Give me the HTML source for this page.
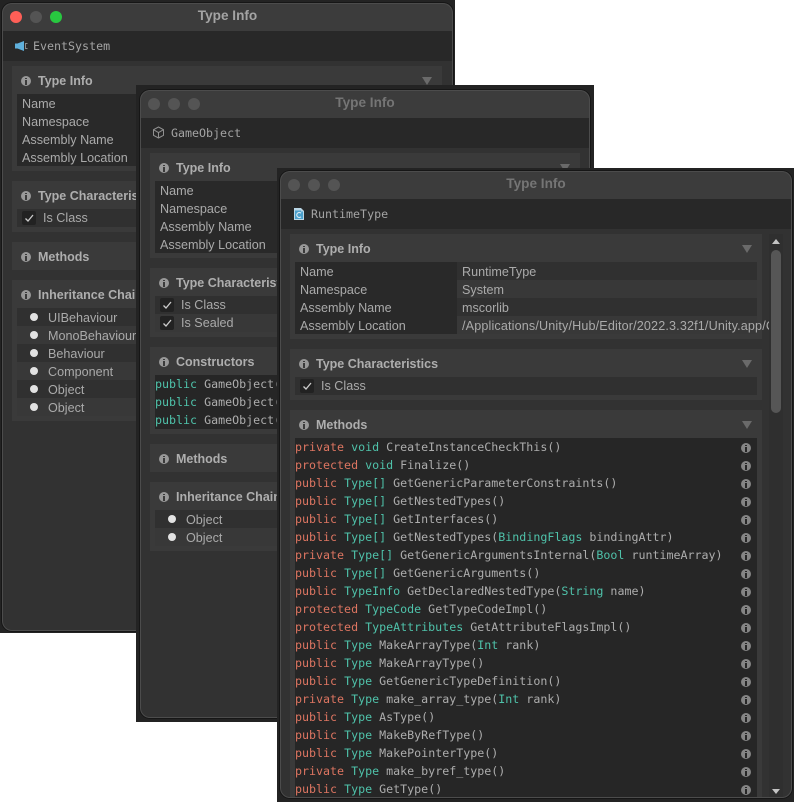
<!DOCTYPE html>
<html><head><meta charset="utf-8"><style>
html,body{margin:0;padding:0;background:#fff;width:794px;height:802px;overflow:hidden}
*{box-sizing:border-box}
#w{position:absolute;left:0;top:0;width:794px;height:802px;overflow:hidden;filter:blur(.35px)}
.box{position:absolute;background:#232323}
.win{position:absolute;background:#323232;border-radius:10px;overflow:hidden;box-shadow:0 0 0 1px #161616;font:12.6px/18px "Liberation Sans",sans-serif;color:#aaa}
.win:after{content:"";position:absolute;inset:0;border-radius:10px;border:1px solid #4c4c4c;pointer-events:none}
.tb{position:absolute;left:0;right:0;top:0;height:28px;background:#3c3c3c}
.tt{position:absolute;left:0;right:0;top:4px;text-align:center;font:bold 13.6px/18px "Liberation Sans",sans-serif;color:#757575}
.l{position:absolute;top:8px;width:12px;height:12px;border-radius:50%;background:#545454}
.bar{position:absolute;left:0;right:0;top:28px;height:30px;background:#282828}
.nm{position:absolute;left:31px;top:6px;font:11.65px/18px "DejaVu Sans Mono","Liberation Mono",monospace;color:#a4a4a4}
.ic{position:absolute;left:12px;top:8px}
.s{position:absolute;left:10px;background:#3a3a3a}
.h{position:absolute;left:26px;top:6px;font:bold 12.5px/18px "Liberation Sans",sans-serif;color:#aeaeae;white-space:nowrap}
i.n{position:absolute;left:9px;top:10px;width:10px;height:10px;border-radius:50%;background:#999}
i.n:before{content:"";position:absolute;left:4px;top:1.5px;width:2px;height:1.6px;background:#3a3a3a}
i.n:after{content:"";position:absolute;left:4px;top:4px;width:2px;height:4.5px;background:#3a3a3a}
.t{position:absolute;left:0;width:0;height:0;border-left:5px solid transparent;border-right:5px solid transparent;border-top:8.5px solid #6a6a6a}
.r{position:absolute;left:5px;right:5px;height:18px;white-space:nowrap;overflow:hidden}
.a{background:#303030}.b{background:#383838}
.d{background:#292929}
.r span{line-height:20px}
.r span.x{position:absolute;left:5px;top:0}
.r span.v{position:absolute;left:167px;top:0}
.r .k~span.x{line-height:19px}
.k{position:absolute;left:5px;top:2px;width:14px;height:14px;background:#222;border-radius:2px}
.o{position:absolute;left:13px;top:5px;width:8px;height:8px;border-radius:50%;background:#e2e2e2}
.code{position:absolute;left:5px;font:11.65px/18px "DejaVu Sans Mono","Liberation Mono",monospace;color:#adadad;background:#262626;white-space:nowrap;overflow:hidden}
.code div{height:18px;position:relative}
.code i.n{left:auto;right:6px;top:5px;background:#858585}
.code i.n:before,.code i.n:after{background:#262626}
b{font-weight:normal}
.p{color:#dd7561}.c{color:#4fc2aa}
</style></head><body><div id="w">

<!-- WINDOW 1 -->
<div class="box" style="left:0;top:0;width:455px;height:633px"></div>
<div class="win" style="left:2px;top:3px;width:451px;height:628px">
  <div class="tb"></div><div class="tt" style="color:#a4a4a4">Type Info</div>
  <div class="l" style="left:8px;background:#fe5f57"></div><div class="l" style="left:28px"></div><div class="l" style="left:48px;background:#28c840"></div>
  <div class="bar"><div class="nm">EventSystem</div>
    <svg class="ic" style="left:13px;top:10px" width="13" height="10" viewBox="0 0 13 10"><path d="M0 2.500L2.500 2.500 9 0v10L2.500 7.500 0 7.500z" fill="#5fb0dc"/><path d="M10 2.500h2.500M10 7.500h2.500M10.500 2v6" fill="none" stroke="#8a8a8a" stroke-width="1"/></svg></div>
  <div class="s" style="top:63px;width:430px;height:105px"><i class="n"></i><div class="h">Type Info</div><div class="t" style="left:410px;top:11px"></div>
    <div class="r d" style="top:28px;height:72px;right:5px"></div>
    <div class="r" style="top:28px"><span class="x">Name</span></div>
    <div class="r" style="top:46px"><span class="x">Namespace</span></div>
    <div class="r" style="top:64px"><span class="x">Assembly Name</span></div>
    <div class="r" style="top:82px"><span class="x">Assembly Location</span></div>
  </div>
  <div class="s" style="top:178px;width:430px;height:51px"><i class="n"></i><div class="h">Type Characteristics</div>
    <div class="r a" style="top:28px"><div class="k"></div><svg style="position:absolute;left:5px;top:2px" width="14" height="14"><path d="M3.500 7.500l2.500 2.500 5-6" fill="none" stroke="#ccc" stroke-width="1.300"/></svg><span class="x" style="left:26px">Is Class</span></div>
  </div>
  <div class="s" style="top:239px;width:430px;height:28px"><i class="n"></i><div class="h">Methods</div></div>
  <div class="s" style="top:277px;width:430px;height:141px"><i class="n"></i><div class="h">Inheritance Chain</div>
    <div class="r a" style="top:28px"><div class="o"></div><span class="x" style="left:31px">UIBehaviour</span></div>
    <div class="r b" style="top:46px"><div class="o"></div><span class="x" style="left:31px">MonoBehaviour</span></div>
    <div class="r a" style="top:64px"><div class="o"></div><span class="x" style="left:31px">Behaviour</span></div>
    <div class="r b" style="top:82px"><div class="o"></div><span class="x" style="left:31px">Component</span></div>
    <div class="r a" style="top:100px"><div class="o"></div><span class="x" style="left:31px">Object</span></div>
    <div class="r b" style="top:118px"><div class="o"></div><span class="x" style="left:31px">Object</span></div>
  </div>
</div>

<!-- WINDOW 2 -->
<div class="box" style="left:136px;top:85px;width:458px;height:637px"></div>
<div class="win" style="left:140px;top:90px;width:450px;height:628px">
  <div class="tb"></div><div class="tt">Type Info</div>
  <div class="l" style="left:8px"></div><div class="l" style="left:28px"></div><div class="l" style="left:48px"></div>
  <div class="bar"><div class="nm">GameObject</div>
    <svg class="ic" width="13" height="13" viewBox="0 0 13 13"><path d="M6.500 1l5 2.700v5.600l-5 2.700-5-2.700V3.700zM1.500 3.700l5 2.800 5-2.800M6.500 6.500V12" fill="none" stroke="#909090" stroke-width="1"/></svg></div>
  <div class="s" style="top:63px;width:430px;height:105px"><i class="n"></i><div class="h">Type Info</div><div class="t" style="left:410px;top:11px"></div>
    <div class="r d" style="top:28px;height:72px"></div>
    <div class="r" style="top:28px"><span class="x">Name</span></div>
    <div class="r" style="top:46px"><span class="x">Namespace</span></div>
    <div class="r" style="top:64px"><span class="x">Assembly Name</span></div>
    <div class="r" style="top:82px"><span class="x">Assembly Location</span></div>
  </div>
  <div class="s" style="top:178px;width:430px;height:69px"><i class="n"></i><div class="h">Type Characteristics</div>
    <div class="r a" style="top:28px"><div class="k"></div><svg style="position:absolute;left:5px;top:2px" width="14" height="14"><path d="M3.500 7.500l2.500 2.500 5-6" fill="none" stroke="#ccc" stroke-width="1.300"/></svg><span class="x" style="left:26px">Is Class</span></div>
    <div class="r b" style="top:46px"><div class="k"></div><svg style="position:absolute;left:5px;top:2px" width="14" height="14"><path d="M3.500 7.500l2.500 2.500 5-6" fill="none" stroke="#ccc" stroke-width="1.300"/></svg><span class="x" style="left:26px">Is Sealed</span></div>
  </div>
  <div class="s" style="top:257px;width:430px;height:87px"><i class="n"></i><div class="h">Constructors</div>
    <div class="code" style="top:28px;width:420px;height:54px"><div><b class="c">public</b> GameObject(</div><div><b class="c">public</b> GameObject(</div><div><b class="c">public</b> GameObject(</div></div>
  </div>
  <div class="s" style="top:354px;width:430px;height:28px"><i class="n"></i><div class="h">Methods</div></div>
  <div class="s" style="top:392px;width:430px;height:69px"><i class="n"></i><div class="h">Inheritance Chain</div>
    <div class="r a" style="top:28px"><div class="o"></div><span class="x" style="left:31px">Object</span></div>
    <div class="r b" style="top:46px"><div class="o"></div><span class="x" style="left:31px">Object</span></div>
  </div>
</div>

<!-- WINDOW 3 -->
<div class="box" style="left:277px;top:168px;width:517px;height:634px"></div>
<div class="win" style="left:280px;top:171px;width:512px;height:627px">
  <div class="tb"></div><div class="tt">Type Info</div>
  <div class="l" style="left:8px"></div><div class="l" style="left:28px"></div><div class="l" style="left:48px"></div>
  <div class="bar"><div class="nm">RuntimeType</div>
    <svg class="ic" style="left:14px;top:9px" width="10" height="12" viewBox="0 0 10 12"><path d="M0 0h7l3 3v9H0z" fill="#b9d6e6"/><path d="M1 2.500h6v1h2v7.500H1z" fill="#4a9fcb"/><path d="M7 5.200A2.500 2.500 0 1 0 7 8.800" fill="none" stroke="#d8e8f0" stroke-width="1.200"/></svg></div>
  <div class="s" style="top:63px;width:472px;height:105px"><i class="n"></i><div class="h">Type Info</div><div class="t" style="left:452px;top:11px"></div>
    <div class="r d" style="top:28px;left:5px;width:162px;height:72px"></div>
    <div class="r a" style="top:28px;left:167px;width:300px"></div>
    <div class="r b" style="top:46px;left:167px;width:300px"></div>
    <div class="r a" style="top:64px;left:167px;width:300px"></div>
    <div class="r b" style="top:82px;left:167px;width:300px"></div>
    <div class="r" style="top:28px;width:500px"><span class="x">Name</span><span class="v">RuntimeType</span></div>
    <div class="r" style="top:46px;width:500px"><span class="x">Namespace</span><span class="v">System</span></div>
    <div class="r" style="top:64px;width:500px"><span class="x">Assembly Name</span><span class="v">mscorlib</span></div>
    <div class="r" style="top:82px;width:474px"><span class="x">Assembly Location</span><span class="v" style="letter-spacing:.15px">/Applications/Unity/Hub/Editor/2022.3.32f1/Unity.app/Contents</span></div>
  </div>
  <div class="s" style="top:178px;width:472px;height:51px"><i class="n"></i><div class="h">Type Characteristics</div><div class="t" style="left:452px;top:11px"></div>
    <div class="r a" style="top:28px"><div class="k"></div><svg style="position:absolute;left:5px;top:2px" width="14" height="14"><path d="M3.500 7.500l2.500 2.500 5-6" fill="none" stroke="#ccc" stroke-width="1.300"/></svg><span class="x" style="left:26px">Is Class</span></div>
  </div>
  <div class="s" style="top:239px;width:472px;height:400px"><i class="n"></i><div class="h">Methods</div><div class="t" style="left:452px;top:11px"></div>
    <div class="code" style="top:28px;width:462px;height:372px">
<div><b class="p">private</b> <b class="c">void</b> CreateInstanceCheckThis()<i class="n"></i></div>
<div><b class="p">protected</b> <b class="c">void</b> Finalize()<i class="n"></i></div>
<div><b class="p">public</b> <b class="c">Type[]</b> GetGenericParameterConstraints()<i class="n"></i></div>
<div><b class="p">public</b> <b class="c">Type[]</b> GetNestedTypes()<i class="n"></i></div>
<div><b class="p">public</b> <b class="c">Type[]</b> GetInterfaces()<i class="n"></i></div>
<div><b class="p">public</b> <b class="c">Type[]</b> GetNestedTypes(<b class="c">BindingFlags</b> bindingAttr)<i class="n"></i></div>
<div><b class="p">private</b> <b class="c">Type[]</b> GetGenericArgumentsInternal(<b class="c">Bool</b> runtimeArray)<i class="n"></i></div>
<div><b class="p">public</b> <b class="c">Type[]</b> GetGenericArguments()<i class="n"></i></div>
<div><b class="p">public</b> <b class="c">TypeInfo</b> GetDeclaredNestedType(<b class="c">String</b> name)<i class="n"></i></div>
<div><b class="p">protected</b> <b class="c">TypeCode</b> GetTypeCodeImpl()<i class="n"></i></div>
<div><b class="p">protected</b> <b class="c">TypeAttributes</b> GetAttributeFlagsImpl()<i class="n"></i></div>
<div><b class="p">public</b> <b class="c">Type</b> MakeArrayType(<b class="c">Int</b> rank)<i class="n"></i></div>
<div><b class="p">public</b> <b class="c">Type</b> MakeArrayType()<i class="n"></i></div>
<div><b class="p">public</b> <b class="c">Type</b> GetGenericTypeDefinition()<i class="n"></i></div>
<div><b class="p">private</b> <b class="c">Type</b> make_array_type(<b class="c">Int</b> rank)<i class="n"></i></div>
<div><b class="p">public</b> <b class="c">Type</b> AsType()<i class="n"></i></div>
<div><b class="p">public</b> <b class="c">Type</b> MakeByRefType()<i class="n"></i></div>
<div><b class="p">public</b> <b class="c">Type</b> MakePointerType()<i class="n"></i></div>
<div><b class="p">private</b> <b class="c">Type</b> make_byref_type()<i class="n"></i></div>
<div><b class="p">public</b> <b class="c">Type</b> GetType()<i class="n"></i></div>
    </div>
  </div>
  <div style="position:absolute;left:489px;top:63px;width:14px;height:564px;background:#2f2f2f"></div>
  <div style="position:absolute;left:491px;top:79px;width:10px;height:163px;border-radius:5px;background:#565656"></div>
  <div class="t" style="left:492px;top:68px;border-left-width:4px;border-right-width:4px;border-top:0;border-bottom:5px solid #c4c4c4"></div>
  <div class="t" style="left:492px;top:618px;border-left-width:4px;border-right-width:4px;border-top:5px solid #c4c4c4"></div>
</div>
</div></body></html>
